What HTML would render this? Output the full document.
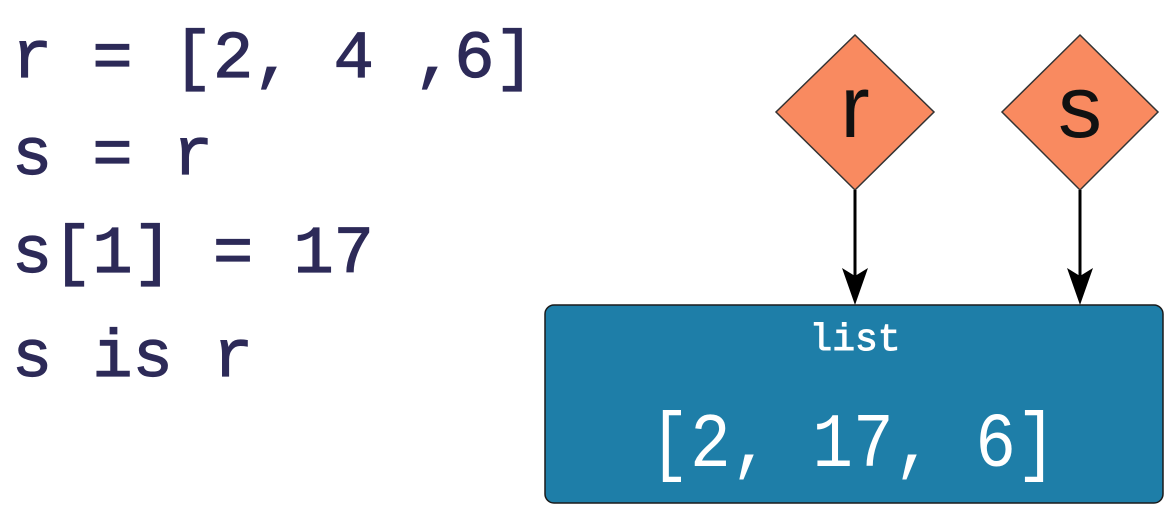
<!DOCTYPE html>
<html><head><style>
body{margin:0;width:1176px;height:516px;background:#fff;overflow:hidden;position:relative;font-family:"Liberation Mono",monospace}
.c{position:absolute;left:12px;font-size:67px;color:#2d2a58;white-space:pre;line-height:1;-webkit-text-stroke:1.2px #2d2a58}
</style></head><body>
<div class="c" style="top:27px">r = [2, 4 ,6]</div>
<div class="c" style="top:124px">s = r</div>
<div class="c" style="top:222px">s[1] = 17</div>
<div class="c" style="top:326px">s is r</div>
<svg width="1176" height="516" style="position:absolute;left:0;top:0">
<polygon points="855,35 934,112 855,190 776,112" fill="#f98a60" stroke="#333" stroke-width="1.5"/>
<polygon points="1080,35 1158,112 1080,190 1002,112" fill="#f98a60" stroke="#333" stroke-width="1.5"/>
<text x="855" y="137" text-anchor="middle" font-family="Liberation Sans,sans-serif" font-size="88" fill="#111">r</text>
<text x="1080" y="137" text-anchor="middle" font-family="Liberation Sans,sans-serif" font-size="88" fill="#111">s</text>
<line x1="855" y1="190" x2="855" y2="280" stroke="#000" stroke-width="3"/>
<line x1="1080" y1="190" x2="1080" y2="280" stroke="#000" stroke-width="3"/>
<polygon points="842,268 855,276 868,268 855,305" fill="#000"/>
<polygon points="1067,268 1080,276 1093,268 1080,305" fill="#000"/>
<rect x="545" y="305" width="618" height="198" rx="9" fill="#1e7ea8" stroke="#1a1a1a" stroke-width="1.5"/>
<text x="855" y="350" text-anchor="middle" font-family="Liberation Mono,monospace" font-size="38" fill="#fff" stroke="#fff" stroke-width="1">list</text>
<text x="853" y="466" text-anchor="middle" font-family="Liberation Mono,monospace" font-size="70" fill="#fff" transform="translate(853 466) scale(0.97 1.1) translate(-853 -466)">[2, 17, 6]</text>
</svg>
</body></html>
